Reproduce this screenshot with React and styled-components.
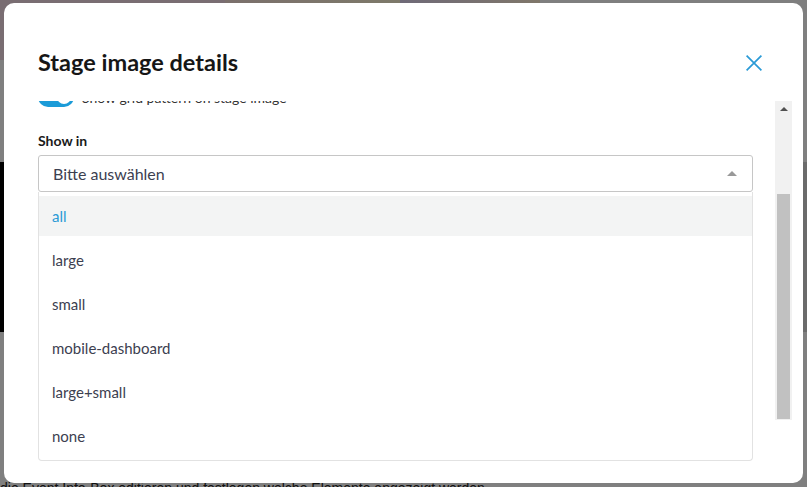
import { useLayoutEffect, useRef, useState } from 'react'
import { styled, createGlobalStyle } from 'styled-components'

const GlobalStyle = createGlobalStyle`
  html, body {
    margin: 0;
    padding: 0;
    height: 100%;
    overflow: hidden;
  }
  body {
    font-family: Lato, "Noto Sans", "Liberation Sans", sans-serif;
    background: #ffffff;
  }
  * {
    box-sizing: border-box;
  }
`

// --- page behind the dialog ---

const Page = styled.div`
  display: flex;
  flex-direction: column;
  height: 100vh;
  background: #ffffff;
`

const Thumbs = styled.div`
  display: flex;
  height: 60px;
  flex: none;
`

const Thumb = styled.div`
  width: ${(p) => p.$w}px;
  background: ${(p) => p.$bg};
`

const Intro = styled.div`
  height: 102px;
  flex: none;
`

const Hero = styled.div`
  display: flex;
  height: 170px;
  flex: none;
`

const HeroImage = styled.div`
  flex: 1;
  background: #000;
`

const HeroAside = styled.div`
  width: 120px;
  background: #d6d6d6;
`

const Section = styled.div`
  height: 146px;
  flex: none;
`

const BodyText = styled.p`
  margin: 0;
  font-family: "Liberation Sans", Arial, sans-serif;
  font-size: 14px;
  line-height: 20px;
  color: #222;
  white-space: nowrap;
`

// --- dialog ---

const Overlay = styled.div`
  position: fixed;
  inset: 0;
  display: flex;
  padding: 3px 4px 4px 4px;
  background: rgba(0, 0, 0, 0.5);
`

const Modal = styled.div`
  position: relative;
  flex: 1;
  display: flex;
  flex-direction: column;
  background: #ffffff;
  border-radius: 10px;
`

const Header = styled.div`
  display: flex;
  justify-content: space-between;
  align-items: flex-start;
  height: 98px;
  flex: none;
  padding: 44px 41px 0 34px;
`

const Title = styled.h2`
  margin: 0;
  font-size: 23.5px;
  line-height: 30px;
  font-weight: 700;
  color: #161616;
`

const CloseButton = styled.button`
  display: flex;
  margin-top: 8px;
  padding: 0;
  border: 0;
  background: none;
  cursor: pointer;
`

const BodyWrap = styled.div`
  display: flex;
  height: 319px;
  flex: none;
  margin-right: 11px;
`

const Viewport = styled.div`
  flex: 1;
  overflow: hidden;
  padding: 17px 22px 228px 34px;
`

const ScrollTrack = styled.div`
  display: flex;
  flex-direction: column;
  width: 17px;
  flex: none;
  background: #f1f1f1;
`

const ScrollUp = styled.div`
  display: flex;
  align-items: center;
  justify-content: center;
  height: 17px;
  flex: none;
  padding-bottom: 2px;

  &::before {
    content: '';
    width: 0;
    height: 0;
    border-left: 4px solid transparent;
    border-right: 4px solid transparent;
    border-bottom: 4px solid #505050;
  }
`

const ThumbArea = styled.div`
  flex: 1;
  display: flex;
  flex-direction: column;
  padding: 0 2px 1px 2px;
`

const ScrollThumb = styled.div`
  background: #c1c1c1;
`

const Field = styled.div`
  display: flex;
  flex-direction: column;
  gap: 4px;
  margin-bottom: ${(p) => p.$mb || 0}px;
`

const Label = styled.label`
  font-size: 14px;
  line-height: 20px;
  font-weight: 700;
  color: #1a1a1a;
`

const TextInput = styled.div`
  height: 36px;
  border: 1px solid #c8c8c8;
  border-radius: 3px;
`

const ToggleRow = styled.div`
  display: flex;
  align-items: center;
  gap: 8px;
  height: 20px;
  margin-bottom: 24px;
  font-size: 14px;
  color: #333;
`

const Toggle = styled.span`
  position: relative;
  width: 36px;
  height: 20px;
  border-radius: 10px;
  background: ${(p) => (p.$on ? '#1b9bd8' : '#c8c8c8')};

  &::after {
    content: '';
    position: absolute;
    top: 3px;
    left: ${(p) => (p.$on ? '19px' : '3px')};
    width: 14px;
    height: 14px;
    border-radius: 50%;
    background: #fff;
  }
`

const Select = styled.div`
  display: flex;
  align-items: center;
  justify-content: space-between;
  height: 37px;
  padding: 0 15px 0 14px;
  border: 1px solid #c6c6c6;
  border-radius: 3px;
  font-size: 16px;
  color: #3c4050;
`

const Caret = styled.span`
  width: 0;
  height: 0;
  border-left: 5px solid transparent;
  border-right: 5px solid transparent;
  border-bottom: 5px solid #999;
`

// the open option list sits over the dialog body
const Menu = styled.ul`
  position: absolute;
  top: 189px;
  left: 34px;
  width: 715px;
  margin: 0;
  padding: 4px 0;
  list-style: none;
  display: flex;
  flex-direction: column;
  gap: 4px;
  background: #fff;
  border: 1px solid #e2e2e2;
  border-top: 0;
  border-radius: 0 0 4px 4px;
`

const Option = styled.li`
  display: flex;
  align-items: center;
  height: 40px;
  padding: 0 13px;
  font-size: 15px;
  color: ${(p) => (p.$active ? '#2a9ad6' : '#3c4050')};
  background: ${(p) => (p.$active ? '#f3f4f4' : 'transparent')};
`

const options = ['all', 'large', 'small', 'mobile-dashboard', 'large+small', 'none']

export default function App() {
  const bodyRef = useRef(null)
  const [thumb, setThumb] = useState({ top: 0, height: 0 })

  useLayoutEffect(() => {
    const el = bodyRef.current
    if (!el) return
    el.scrollTop = el.scrollHeight
    // track length = viewport minus the arrow button and 1px end gap
    const track = el.clientHeight - 18
    const height = Math.round((track * el.clientHeight) / el.scrollHeight)
    const max = el.scrollHeight - el.clientHeight
    const top = max > 0 ? Math.round(((track - height) * el.scrollTop) / max) : 0
    setThumb({ top, height })
  }, [])

  return (
    <>
      <GlobalStyle />
      <Page>
        <Thumbs>
          <Thumb $w={225} $bg="#f2dbe4" />
          <Thumb $w={175} $bg="linear-gradient(90deg, #f6e0d8, #fbf3d4)" />
          <Thumb $w={140} $bg="linear-gradient(90deg, #ded4f0, #ffeed4)" />
        </Thumbs>
        <Intro />
        <Hero>
          <HeroImage />
          <HeroAside />
        </Hero>
        <Section />
        <BodyText>die Event Info-Box editieren und festlegen welche Elemente angezeigt werden</BodyText>
      </Page>

      <Overlay>
        <Modal>
          <Header>
            <Title>Stage image details</Title>
            <CloseButton aria-label="Close">
              <svg width="16" height="16" viewBox="0 0 16 16">
                <path d="M0.6 0.6 L15.4 15.4 M15.4 0.6 L0.6 15.4" stroke="#2a9ad6" strokeWidth="1.7" fill="none" />
              </svg>
            </CloseButton>
          </Header>

          <BodyWrap>
            <Viewport ref={bodyRef}>
              <Field $mb={16}>
                <Label>Alt text</Label>
                <TextInput />
              </Field>
              <ToggleRow>
                <Toggle $on />
                Show grid pattern on stage image
              </ToggleRow>
              <Field>
                <Label>Show in</Label>
                <Select>
                  Bitte auswählen
                  <Caret />
                </Select>
              </Field>
            </Viewport>
            <ScrollTrack>
              <ScrollUp />
              <ThumbArea>
                <ScrollThumb style={{ marginTop: thumb.top, height: thumb.height }} />
              </ThumbArea>
            </ScrollTrack>
          </BodyWrap>

          <Menu>
            {options.map((o, i) => (
              <Option key={o} $active={i === 0}>
                {o}
              </Option>
            ))}
          </Menu>
        </Modal>
      </Overlay>
    </>
  )
}
